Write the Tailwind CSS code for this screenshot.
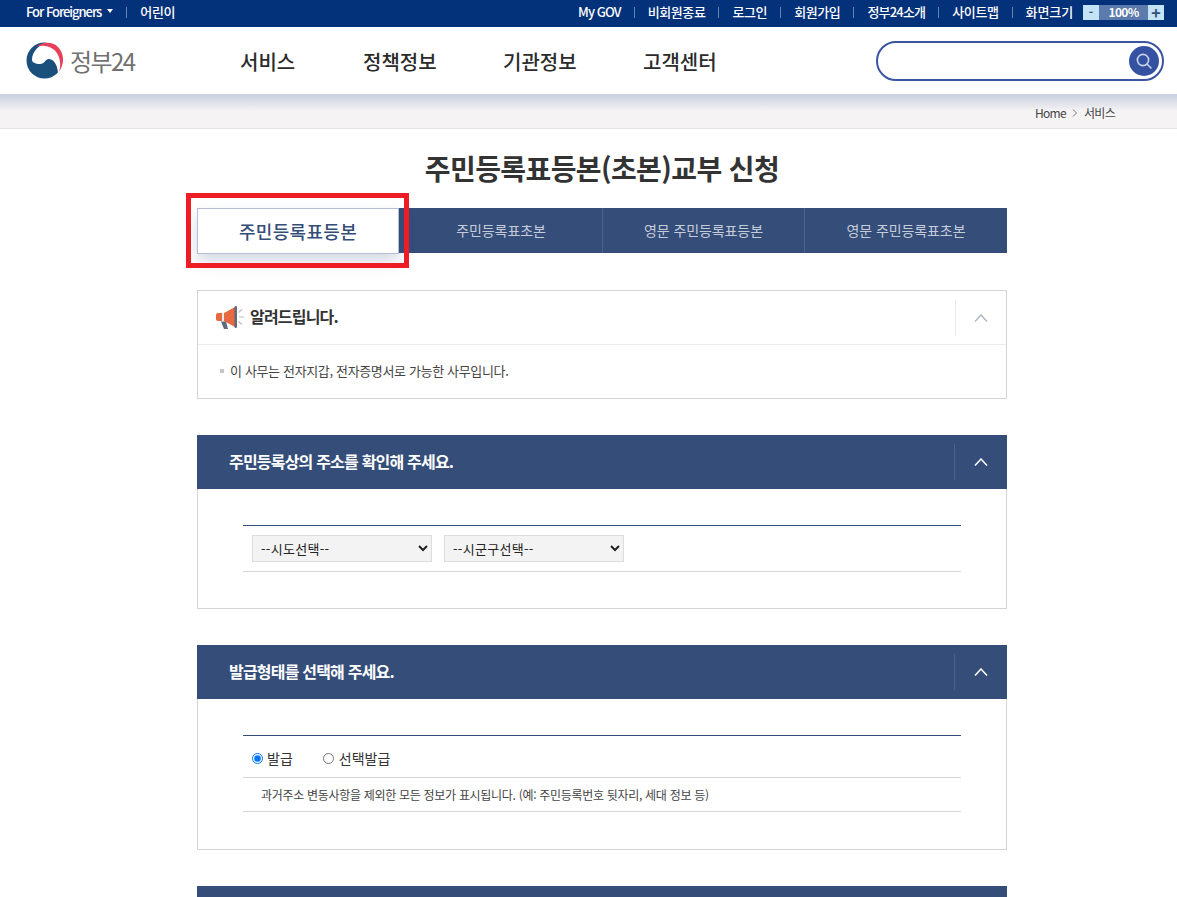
<!DOCTYPE html>
<html lang="ko">
<head>
  <meta charset="UTF-8" />
  <title>주민등록표등본(초본)교부 신청</title>
  <script src="https://cdn.jsdelivr.net/npm/@tailwindcss/browser@4"></script>
</head>
<body class="relative h-[897px] overflow-hidden bg-white text-[#333] font-['Noto_Sans_CJK_KR','Noto_Sans',sans-serif]">
  <!-- top bar -->
  <div class="flex h-[27px] items-center justify-between bg-[#03317a] pb-[3px] pl-[26px] pr-[13px] text-[13px] font-medium text-white">
    <div class="flex items-center">
      <span class="tracking-[-1.05px]">For Foreigners</span>
      <span class="ml-[6px] mt-[-2px] h-0 w-0 border-x-[3.5px] border-t-[4px] border-x-transparent border-t-white"></span>
      <span class="mx-[13px] h-[11px] w-px bg-white/40"></span>
      <span class="tracking-[-0.3px]">어린이</span>
    </div>
    <div class="flex items-center">
      <span class="tracking-[-0.9px]">My GOV</span>
      <span class="mx-[13px] h-[11px] w-px bg-white/40"></span>
      <span class="tracking-[-0.4px]">비회원종료</span>
      <span class="mx-[13px] h-[11px] w-px bg-white/40"></span>
      <span class="tracking-[-0.4px]">로그인</span>
      <span class="mx-[13px] h-[11px] w-px bg-white/40"></span>
      <span class="tracking-[-0.4px]">회원가입</span>
      <span class="mx-[13px] h-[11px] w-px bg-white/40"></span>
      <span class="tracking-[-0.8px]">정부24소개</span>
      <span class="mx-[13px] h-[11px] w-px bg-white/40"></span>
      <span class="tracking-[-0.4px]">사이트맵</span>
      <span class="mx-[13px] h-[11px] w-px bg-white/40"></span>
      <span class="tracking-[-0.1px]">화면크기</span>
      <div class="ml-[10px] flex h-[15px] w-[81px] items-center bg-[#5a7bab] text-[12px] font-bold">
        <span class="flex h-full w-4 items-center justify-center bg-[#c5e3f6] text-[#33507a]">-</span>
        <span class="flex-1 text-center tracking-[-0.7px]">100%</span>
        <span class="flex h-full w-4 items-center justify-center bg-[#c5e3f6] text-[16px] text-[#33507a]">+</span>
      </div>
    </div>
  </div>

  <!-- header -->
  <header class="flex h-[67px] items-center bg-white pl-[26px] pr-[13px]">
    <div class="flex w-[214px] items-center">
      <svg class="h-[37px] w-[37px]" viewBox="6 7 37 37">
        <circle cx="24.5" cy="25.5" r="18" fill="#1b4f7c" />
        <path d="M12 25C12 15 21 9 30 6L44 14 44 30C43 34 41 37 38 39 38 33 35 24 29 24 25 24 25 29 20 29 15 29 12 27 12 25Z" fill="#fff" />
        <path d="M16 12C22 7 32 6 38 12 44 18 45 28 39 37 42 28 39 18 33 14 27 10 21 10 16 12Z" fill="#e8405a" />
      </svg>
      <span class="ml-[7px] text-[24px] leading-none tracking-[-1.6px] text-[#717171]">정부24</span>
    </div>
    <nav class="flex pt-[3px] text-[20px] font-medium text-[#2b2b2b]">
      <a class="w-[123px]">서비스</a>
      <a class="w-[140px]">정책정보</a>
      <a class="w-[140px]">기관정보</a>
      <a>고객센터</a>
    </nav>
    <div class="ml-auto flex h-10 w-[288px] items-center justify-end rounded-full border-2 border-[#3b55a2] pr-[3px]">
      <span class="flex h-[30px] w-[30px] items-center justify-center rounded-full bg-[#3552a2]">
        <svg class="h-[18px] w-[18px]" viewBox="0 0 18 18" fill="none" stroke="#c9d4ea" stroke-width="1.6">
          <circle cx="8" cy="8" r="5.6" />
          <path d="M12.2 12.2 16 16" stroke-linecap="round" />
        </svg>
      </span>
    </div>
  </header>

  <!-- breadcrumb -->
  <div class="flex h-[35px] items-center justify-end border-b border-[#e6e6e6] bg-gradient-to-b from-[#c8cfdf] from-0% via-[#f5f3f4] via-50% to-[#f5f3f4] pr-[62px] pt-[3px] text-[12px] tracking-[-0.7px] text-[#444]">
    <span>Home</span>
    <svg class="mx-[6px] h-2 w-[6px]" viewBox="0 0 6 8" fill="none" stroke="#777"><path d="M1 .5 4.5 4 1 7.5" /></svg>
    <span>서비스</span>
  </div>

  <main class="ml-[197px] w-[810px]">
    <h1 class="mt-5 h-[38px] text-center text-[28px] font-bold leading-[38px] tracking-[-0.6px] text-[#333]">주민등록표등본(초본)교부 신청</h1>

    <!-- tabs -->
    <div class="mt-[21px] flex h-[45px] bg-[#354d79] text-[14px] tracking-[-0.1px] text-[#c5ccd9]">
      <div class="flex h-[46px] w-[202px] items-center justify-center border border-[#b3bcd9] bg-white text-[18px] font-medium tracking-[0.3px] text-[#354d79] shadow-[0_8px_16px_rgba(60,80,130,0.22)]">주민등록표등본</div>
      <div class="ml-[1px] flex w-[203px] items-center justify-center border-r border-[#4a618a]">주민등록표초본</div>
      <div class="flex w-[202px] items-center justify-center border-r border-[#4a618a]">영문 주민등록표등본</div>
      <div class="flex flex-1 items-center justify-center">영문 주민등록표초본</div>
    </div>

    <!-- notice -->
    <section class="mt-[37px] h-[109px] border border-[#d5d5d5]">
      <div class="flex h-[54px] items-center border-b border-[#ebebeb] pl-[17px]">
        <svg class="h-[26px] w-[30px]" viewBox="0 0 30 26">
          <path d="M3 8h4v8H3a2 2 0 0 1-2-2v-4a2 2 0 0 1 2-2Z" fill="#e8693f" />
          <path d="M7 8h2v8H7Z" fill="#e9e9e9" />
          <path d="M9 8 20 2v20L9 16Z" fill="#e8693f" />
          <rect x="19.5" y="1" width="2.5" height="22" rx="1.2" fill="#5f6b7a" />
          <path d="M6 16.5h5l2 7.5H9Z" fill="#5f6b7a" />
          <path d="M24 12h5M23.5 7.5l3.5-3M23.5 16.5l3.5 3" stroke="#b9bec6" stroke-width="1.2" />
        </svg>
        <h2 class="mb-[3px] ml-[5px] text-[16px] font-bold tracking-[-0.8px] text-[#333]">알려드립니다.</h2>
        <div class="ml-auto flex h-9 w-[51px] items-center justify-center border-l border-[#ebebeb]">
          <svg class="h-2 w-[14px]" viewBox="0 0 14 8" fill="none" stroke="#a9b2bd" stroke-width="1.2"><path d="M1 7.5 7 1l6 6.5" /></svg>
        </div>
      </div>
      <p class="flex h-[52px] items-center pl-[22px] text-[13px] tracking-[-0.35px] text-[#444]">
        <span class="mr-[6px] h-1 w-1 bg-[#c4c4c4]"></span>이 사무는 전자지갑, 전자증명서로 가능한 사무입니다.
      </p>
    </section>

    <!-- address -->
    <section class="mt-9 h-[174px] border border-t-0 border-[#d5d5d5]">
      <div class="mx-[-1px] flex h-[54px] items-center bg-[#354d79] pl-[32px] text-white">
        <h2 class="mb-[2px] text-[16px] font-bold tracking-[-0.8px]">주민등록상의 주소를 확인해 주세요.</h2>
        <div class="ml-auto flex h-9 w-[53px] items-center justify-center border-l border-[#4a618a]">
          <svg class="h-2 w-[14px]" viewBox="0 0 14 8" fill="none" stroke="#fff" stroke-width="1.5"><path d="M1 7.5 7 1l6 6.5" /></svg>
        </div>
      </div>
      <div class="mx-[45px] mt-9 flex h-[47px] items-center gap-3 border-y border-t-[#354d79] border-b-[#d5d5d5] pl-[9px]">
        <select class="h-[27px] w-[180px] border border-[#ddd] bg-[#f3f3f3] pl-1 text-[13px] tracking-[0.3px] text-[#222]"><option>--시도선택--</option></select>
        <select class="h-[27px] w-[180px] border border-[#ddd] bg-[#f3f3f3] pl-1 text-[13px] tracking-[0.3px] text-[#222]"><option>--시군구선택--</option></select>
      </div>
    </section>

    <!-- type -->
    <section class="mt-9 h-[205px] border border-t-0 border-[#d5d5d5]">
      <div class="mx-[-1px] flex h-[54px] items-center bg-[#354d79] pl-[32px] text-white">
        <h2 class="mb-[2px] text-[16px] font-bold tracking-[-0.8px]">발급형태를 선택해 주세요.</h2>
        <div class="ml-auto flex h-9 w-[53px] items-center justify-center border-l border-[#4a618a]">
          <svg class="h-2 w-[14px]" viewBox="0 0 14 8" fill="none" stroke="#fff" stroke-width="1.5"><path d="M1 7.5 7 1l6 6.5" /></svg>
        </div>
      </div>
      <div class="mx-[45px] mt-9 border-y border-t-[#354d79] border-b-[#d5d5d5]">
        <div class="flex h-[42px] items-center border-b border-[#d5d5d5] pb-[-1px] pl-[9px] pt-[4px] text-[14px] text-[#333]">
          <label class="flex items-center"><input type="radio" name="kind" checked class="m-0 mr-[4px] h-[11px] w-[11px]" />발급</label>
          <label class="ml-[30px] flex items-center"><input type="radio" name="kind" class="m-0 mr-[5px] h-[11px] w-[11px]" />선택발급</label>
        </div>
        <p class="flex h-[33px] items-center pl-[18px] text-[12px] tracking-[-0.3px] text-[#444]">과거주소 변동사항을 제외한 모든 정보가 표시됩니다. (예: 주민등록번호 뒷자리, 세대 정보 등)</p>
      </div>
    </section>

    <div class="mt-9 h-[54px] bg-[#354d79]"></div>
  </main>

  <!-- red highlight drawn over the first tab -->
  <div class="pointer-events-none absolute left-[186px] top-[193px] h-[75px] w-[223px] border-[5px] border-[#ee1c25]"></div>
</body>
</html>
